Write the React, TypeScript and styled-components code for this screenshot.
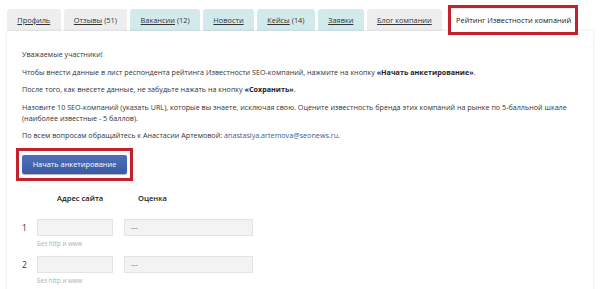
import React from "react";
import styled, { createGlobalStyle } from "styled-components";

const GlobalStyle = createGlobalStyle`
  html, body {
    margin: 0;
    padding: 0;
    background: #ffffff;
  }
  body {
    font-family: "Open Sans", "Liberation Sans", sans-serif;
    color: #333333;
  }
`;

const Page = styled.div`
  width: 600px;
  height: 289px;
  overflow: hidden;
  padding: 9px 0 0 7px;
  box-sizing: border-box;
`;

const Tabs = styled.div`
  display: flex;
  align-items: flex-end;
  gap: 3px;
  height: 22px;
`;

const Tab = styled.div<{ $tone?: "grey" | "teal" | "active" }>`
  height: 22px;
  display: flex;
  align-items: center;
  padding: 0 10.3px;
  border-radius: 3px 3px 0 0;
  font-size: 7.4px;
  white-space: pre;
  background: ${(p) =>
    p.$tone === "teal" ? "#d3eaed" : p.$tone === "active" ? "#ffffff" : "#eeeeee"};
  position: relative;

  a {
    color: #333;
    text-decoration: underline;
  }
`;

const ActiveTab = styled(Tab)`
  margin-left: 6px;
  padding: 0 4px 0 5px;
  z-index: 2;
  color: #222;
  box-shadow: 0 -1px 2px rgba(0, 0, 0, 0.08);

  &::after {
    content: "";
    position: absolute;
    left: -3px;
    right: -3px;
    top: -4px;
    bottom: -4px;
    border: 3px solid #c6202c;
  }
`;

const Panel = styled.div`
  width: 586px;
  height: 260px;
  box-sizing: border-box;
  background: #fff;
  border-radius: 3px 3px 0 0;
  box-shadow: 0 0 3px rgba(0, 0, 0, 0.15);
  padding: 18px 15px 0 15px;
  position: relative;
  z-index: 1;
`;

const Text = styled.p`
  margin: 0 0 6.5px 0;
  font-size: 7.2px;
  line-height: 11px;
  color: #333;

  b {
    font-weight: 700;
    color: #222;
  }
  a {
    color: #3b5b98;
    text-decoration: none;
  }
`;

const ButtonFrame = styled.div`
  margin: 6px 0 0 -6px;
  width: 117px;
  height: 33px;
  box-sizing: border-box;
  border: 3px solid #c6202c;
  display: flex;
  align-items: center;
  justify-content: center;
`;

const StartButton = styled.button`
  width: 105px;
  height: 19px;
  border: none;
  border-radius: 2px;
  background: linear-gradient(#4d70b8, #3a5ba3);
  box-shadow: 0 1px 1px rgba(0, 0, 0, 0.3);
  color: #fff;
  font-family: "Open Sans", "Liberation Sans", sans-serif;
  font-size: 7.4px;
  padding: 0;
`;

const Grid = styled.div`
  display: grid;
  grid-template-columns: 15px 76px 11px 129px;
  margin-top: 6px;
`;

const Head = styled.div<{ $col: number }>`
  grid-column: ${(p) => p.$col};
  font-size: 7.6px;
  font-weight: 600;
  color: #222;
  height: 22px;
  display: flex;
  align-items: center;
  padding-left: ${(p) => (p.$col === 2 ? "20px" : "14px")};
  white-space: nowrap;
`;

const Num = styled.div`
  grid-column: 1;
  font-size: 8.5px;
  color: #333;
  height: 17px;
  display: flex;
  align-items: center;
`;

const Field = styled.div<{ $col: number }>`
  grid-column: ${(p) => p.$col};
  height: 17px;
  box-sizing: border-box;
  background: #f3f3f3;
  border: 1px solid #e4e4e4;
  font-size: 7px;
  color: #666;
  display: flex;
  align-items: center;
  padding-left: 6px;
`;

const Hint = styled.div`
  grid-column: 2 / span 3;
  font-size: 6.2px;
  color: #b0b0b0;
  height: 20px;
  padding-top: 3px;
  box-sizing: border-box;
`;

const Spacer = styled.div<{ $h: number }>`
  grid-column: 1 / span 4;
  height: ${(p) => p.$h}px;
`;

const tabs = [
  { label: "Профиль", tone: "grey" as const },
  { label: "Отзывы", count: " (51)", tone: "grey" as const },
  { label: "Вакансии", count: " (12)", tone: "teal" as const },
  { label: "Новости", tone: "teal" as const },
  { label: "Кейсы", count: " (14)", tone: "teal" as const },
  { label: "Заявки", tone: "teal" as const },
  { label: "Блог компании", tone: "grey" as const },
];

export default function App() {
  return (
    <Page>
      <GlobalStyle />
      <Tabs>
        {tabs.map((t) => (
          <Tab key={t.label} $tone={t.tone}>
            <span>
              <a>{t.label}</a>
              {t.count}
            </span>
          </Tab>
        ))}
        <ActiveTab $tone="active">Рейтинг Известности компаний</ActiveTab>
      </Tabs>
      <Panel>
        <Text>Уважаемые участники!</Text>
        <Text>
          Чтобы внести данные в лист респондента рейтинга Известности SEO-компаний, нажмите на кнопку{" "}
          <b>«Начать анкетирование»</b>.
        </Text>
        <Text>
          После того, как внесете данные, не забудьте нажать на кнопку <b>«Сохранить»</b>.
        </Text>
        <Text>
          Назовите 10 SEO-компаний (указать URL), которые вы знаете, исключая свою. Оцените известность бренда
          этих компаний на рынке по 5-балльной шкале (наиболее известные - 5 баллов).
        </Text>
        <Text>
          По всем вопросам обращайтесь к Анастасии Артемовой: <a>anastasiya.artemova@seonews.ru</a>.
        </Text>
        <ButtonFrame>
          <StartButton>Начать анкетирование</StartButton>
        </ButtonFrame>
        <Grid>
          <Head $col={2}>Адрес сайта</Head>
          <Head $col={4}>Оценка</Head>
          <Spacer $h={10} />
          {[1, 2].map((n) => (
            <React.Fragment key={n}>
              <Num>{n}</Num>
              <Field $col={2} />
              <Field $col={4}>---</Field>
              <Hint>Без http и www</Hint>
            </React.Fragment>
          ))}
        </Grid>
      </Panel>
    </Page>
  );
}
